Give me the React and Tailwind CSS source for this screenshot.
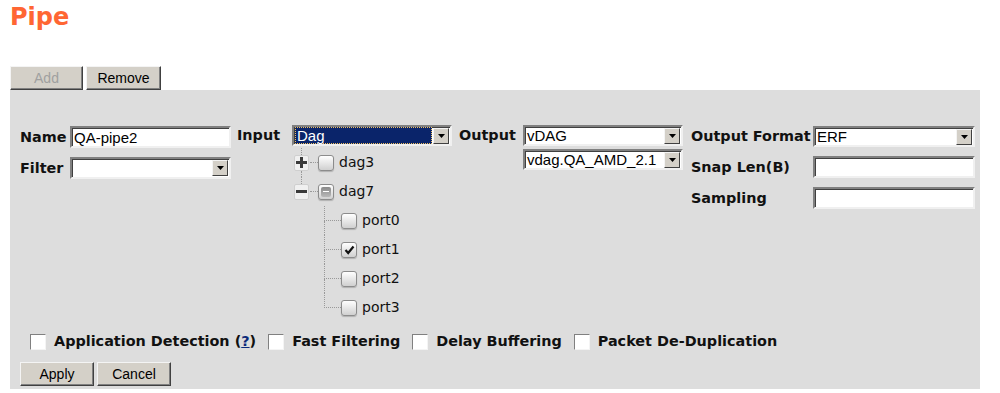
import React from 'react';

const verdana = { fontFamily: '"DejaVu Sans", Verdana, sans-serif' };

const btnCls =
  'h-[24px] bg-[#d4d0c8] border border-t-[#f4f4f4] border-l-[#f4f4f4] border-r-[#404040] border-b-[#404040] shadow-[inset_-1px_-1px_0_#808080] text-[14px] font-["Liberation_Sans",Arial,sans-serif]';

const fieldCls =
  'bg-white border-2 border-t-[#808080] border-l-[#808080] border-r-[#f0f0f0] border-b-[#f0f0f0] shadow-[inset_1px_1px_0_#404040] font-["Liberation_Sans",Arial,sans-serif] text-[15px] text-black';

const Arrow = () => (
  <div className="w-[16px] h-[16px] bg-[#d4d0c8] border border-t-[#f4f4f4] border-l-[#f4f4f4] border-r-[#404040] border-b-[#404040] flex items-center justify-center shrink-0">
    <svg width="7" height="4" viewBox="0 0 7 4">
      <path d="M0 0h7L3.5 4z" fill="#000" />
    </svg>
  </div>
);

const Select = ({ value, width, height = 21, selected }) => (
  <div className={`${fieldCls} flex items-center pr-[1px]`} style={{ width, height }}>
    {selected ? (
      <div className="flex-1 h-full mx-[1px] bg-[#0a246a] text-white leading-[15px] px-[1px] border border-dotted border-[#f0c060]">
        {value}
      </div>
    ) : (
      <div className="flex-1 pl-[2px] leading-[17px] whitespace-nowrap overflow-hidden">{value}</div>
    )}
    <Arrow />
  </div>
);

const TextInput = ({ value = '', width, height = 22 }) => (
  <div className={`${fieldCls} flex items-center pl-[2px] leading-[17px]`} style={{ width, height }}>
    {value}
  </div>
);

const Label = ({ children, width }) => (
  <div className="font-bold text-[14.4px] text-[#111] leading-none whitespace-nowrap" style={{ ...verdana, width }}>
    {children}
  </div>
);

const TreeBox = ({ state }) => (
  <div className="w-[16px] h-[16px] rounded-[3px] border border-[#8c8c8c] bg-gradient-to-b from-white to-[#d0d0d0] shadow-[0_1px_1px_rgba(0,0,0,0.2)] flex items-center justify-center shrink-0">
    {state === 'checked' && (
      <svg width="11" height="10" viewBox="0 0 11 10">
        <path d="M1.5 5l2.7 3L9.5 1.5" fill="none" stroke="#111" strokeWidth="2.2" />
      </svg>
    )}
    {state === 'partial' && (
      <div className="w-[10px] h-[10px] rounded-[2px] bg-gradient-to-b from-[#8a8a8a] to-[#b8b8b8] flex items-center justify-center">
        <div className="w-[6px] h-[1px] bg-white" />
      </div>
    )}
  </div>
);

const Expander = ({ sign }) => (
  <div className="w-[15px] h-[16px] rounded-[2px] bg-[#f0f0f0] border border-[#cfcfcf] flex items-center justify-center shrink-0">
    <svg width="11" height="11" viewBox="0 0 11 11">
      <rect x="0" y="4" width="11" height="3" fill="#3a3a3a" />
      {sign === '+' && <rect x="4" y="0" width="3" height="11" fill="#3a3a3a" />}
    </svg>
  </div>
);

const TopNode = ({ sign, state, label, last }) => (
  <div className="flex items-stretch h-[29px]">
    <div className="w-[17px] flex flex-col items-center">
      <div className="flex-1 border-l border-dotted border-[#999]" />
      <Expander sign={sign} />
      <div className={`flex-1 ${last ? '' : 'border-l border-dotted border-[#999]'}`} />
    </div>
    <div className="flex items-center">
      <div className="w-[8px] border-t border-dotted border-[#999]" />
      <TreeBox state={state} />
      <span className="ml-[5px] text-[14px] text-[#111]" style={verdana}>{label}</span>
    </div>
  </div>
);

const Leaf = ({ state, label, last }) => (
  <div className="flex items-stretch h-[29px] pl-[31px]">
    <div className="w-[17px] flex flex-col">
      <div className="flex-1 border-l border-b border-dotted border-[#999]" />
      <div className={`flex-1 ${last ? '' : 'border-l border-dotted border-[#999]'}`} />
    </div>
    <div className="flex items-center">
      <TreeBox state={state} />
      <span className="ml-[5px] text-[14px] text-[#111]" style={verdana}>{label}</span>
    </div>
  </div>
);

const Check = ({ children }) => (
  <label className="flex items-center gap-[8px]">
    <span className="w-[16px] h-[16px] bg-white border border-t-[#808080] border-l-[#808080] border-r-[#f4f4f4] border-b-[#f4f4f4]" />
    <span className="font-bold text-[14.4px] text-[#111]" style={verdana}>{children}</span>
  </label>
);

export default function App() {
  return (
    <div className="w-[1000px] h-[393px] bg-white overflow-hidden">
      <h1 className="pl-[10px] pt-[3px] text-[24px] font-bold text-[#ff6633] leading-[28px]" style={verdana}>
        Pipe
      </h1>

      <div className="mx-[10px] mt-[35px] w-[970px]">
        {/* Tabs */}
        <div className="flex gap-[3px]">
          <button className={`${btnCls} w-[73px] text-[#a0a0a0]`} disabled>Add</button>
          <button className={`${btnCls} w-[75px] text-black`}>Remove</button>
        </div>

        {/* Panel */}
        <div className="bg-[#dddddd] pt-[35px] pb-[3px] px-[10px]">
          <div className="flex items-start">
            {/* Name / Filter */}
            <div className="flex flex-col gap-[9px] mt-[1px]">
              <div className="flex items-center">
                <Label width={50}>Name</Label>
                <TextInput value="QA-pipe2" width={161} />
              </div>
              <div className="flex items-center">
                <Label width={50}>Filter</Label>
                <Select value="" width={161} height={22} />
              </div>
            </div>

            {/* Input + tree */}
            <div className="flex items-start ml-[6px]">
              <div className="h-[21px] flex items-center"><Label width={55}>Input</Label></div>
              <div className="flex flex-col">
                <Select value="Dag" width={160} selected />
                <div className="pl-[1px] pt-[2px]">
                  <TopNode sign="+" state="empty" label="dag3" />
                  <TopNode sign="-" state="partial" label="dag7" last />
                  <Leaf state="empty" label="port0" />
                  <Leaf state="checked" label="port1" />
                  <Leaf state="empty" label="port2" />
                  <Leaf state="empty" label="port3" last />
                </div>
              </div>
            </div>

            {/* Output */}
            <div className="flex items-start ml-[7px]">
              <div className="h-[21px] flex items-center"><Label width={64}>Output</Label></div>
              <div className="flex flex-col gap-[3px]">
                <Select value="vDAG" width={160} />
                <Select value="vdag.QA_AMD_2.1" width={160} />
              </div>
            </div>

            {/* Output format */}
            <div className="flex flex-col gap-[9px] ml-[8px] mt-[1px]">
              <div className="flex items-center">
                <Label width={122}>Output Format</Label>
                <Select value="ERF" width={162} />
              </div>
              <div className="flex items-center">
                <Label width={122}>Snap Len(B)</Label>
                <TextInput width={162} />
              </div>
              <div className="flex items-center">
                <Label width={122}>Sampling</Label>
                <TextInput width={162} />
              </div>
            </div>
          </div>

          {/* Options */}
          <div className="flex items-center gap-[12px] ml-[10px] mt-[11px] h-[18px]">
            <Check>
              Application Detection (<a className="text-[#0b2a7a] underline" href="#">?</a>)
            </Check>
            <Check>Fast Filtering</Check>
            <Check>Delay Buffering</Check>
            <Check>Packet De-Duplication</Check>
          </div>

          <div className="flex gap-[3px] mt-[11px]">
            <button className={`${btnCls} w-[74px] text-black`}>Apply</button>
            <button className={`${btnCls} w-[74px] text-black`}>Cancel</button>
          </div>
        </div>
      </div>
    </div>
  );
}
